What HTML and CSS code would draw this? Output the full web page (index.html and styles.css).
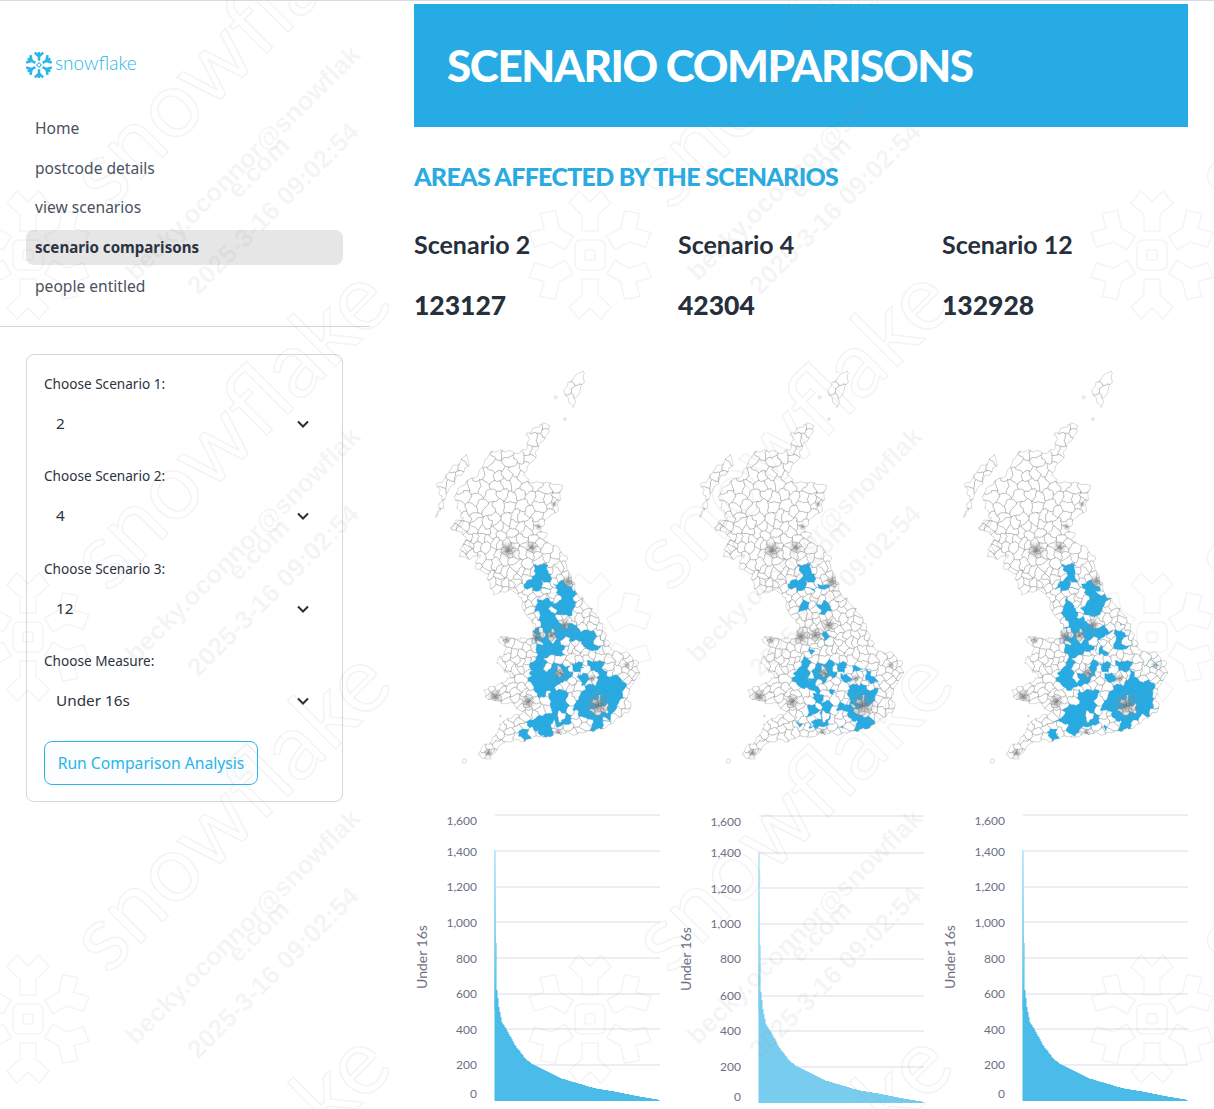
FILE: index.html
```html
<!DOCTYPE html>
<html lang="en">
<head>
    <meta charset="UTF-8">
    <meta name="viewport" content="width=device-width, initial-scale=1.0">
    <title>Scenario Comparisons</title>
    <link rel="stylesheet" href="styles.css">
</head>
<body>

<div class="page">
    <aside class="sidebar">
        <div class="logo">
            <svg class="logo-mark" viewBox="-14 -14 28 28" width="28" height="28">
                <g id="logoArm">
                    <path d="M0 -4.2V-13M-4.2 -12.4L0 -8.4L4.2 -12.4" />
                </g>
                <use href="#logoArm" transform="rotate(60)" />
                <use href="#logoArm" transform="rotate(120)" />
                <use href="#logoArm" transform="rotate(180)" />
                <use href="#logoArm" transform="rotate(240)" />
                <use href="#logoArm" transform="rotate(300)" />
                <rect class="logo-core" x="-1.7" y="-1.7" width="3.4" height="3.4" transform="rotate(45)" />
            </svg>
            <span class="logo-text">snowflake</span>
        </div>

        <nav class="nav">
            <a class="nav-item">Home</a>
            <a class="nav-item">postcode details</a>
            <a class="nav-item">view scenarios</a>
            <a class="nav-item active">scenario comparisons</a>
            <a class="nav-item">people entitled</a>
        </nav>

        <div class="divider"></div>

        <!-- Scenario picker -->
        <form class="picker">
            <div class="field">
                <label class="field-label">Choose Scenario 1:</label>
                <div class="select"><span>2</span><svg class="chevron" viewBox="0 0 12 8"><path d="M1 1.5L6 6.5L11 1.5" /></svg></div>
            </div>
            <div class="field">
                <label class="field-label">Choose Scenario 2:</label>
                <div class="select"><span>4</span><svg class="chevron" viewBox="0 0 12 8"><path d="M1 1.5L6 6.5L11 1.5" /></svg></div>
            </div>
            <div class="field">
                <label class="field-label">Choose Scenario 3:</label>
                <div class="select"><span>12</span><svg class="chevron" viewBox="0 0 12 8"><path d="M1 1.5L6 6.5L11 1.5" /></svg></div>
            </div>
            <div class="field">
                <label class="field-label">Choose Measure:</label>
                <div class="select"><span>Under 16s</span><svg class="chevron" viewBox="0 0 12 8"><path d="M1 1.5L6 6.5L11 1.5" /></svg></div>
            </div>
            <button class="run-button" type="button">Run Comparison Analysis</button>
        </form>
    </aside>

    <main class="main">
        <header class="banner">
            <h1>SCENARIO COMPARISONS</h1>
        </header>

        <h2 class="section-title">AREAS AFFECTED BY THE SCENARIOS</h2>

        <div class="columns">
            <section class="column">
                <h3>Scenario 2</h3>
                <p class="count">123127</p>
                <svg class="map" data-scenario="0" viewBox="42 0 738 1290"></svg>
                <svg class="chart" data-chart="0" viewBox="414 808 246 301"></svg>
            </section>
            <section class="column">
                <h3>Scenario 4</h3>
                <p class="count">42304</p>
                <svg class="map" data-scenario="1" viewBox="42 0 738 1290"></svg>
                <svg class="chart" data-chart="1" viewBox="414 808 246 301"></svg>
            </section>
            <section class="column">
                <h3>Scenario 12</h3>
                <p class="count">132928</p>
                <svg class="map" data-scenario="2" viewBox="42 0 738 1290"></svg>
                <svg class="chart" data-chart="2" viewBox="414 808 246 301"></svg>
            </section>
        </div>
    </main>
</div>

<!-- Faint user watermark over the whole page -->
<svg class="watermark" id="watermark" width="1214" height="1109"></svg>

<script src="map.js"></script>
</body>
</html>
```

FILE: styles.css
```css
html, body {
    margin: 0;
    padding: 0;
    height: 1109px;
    overflow: hidden;
}
body {
    font-family: 'Noto Sans', sans-serif;
    background-color: #fff;
    color: #262730;
    border-top: 1px solid #d5dae5;
    box-sizing: border-box;
    position: relative;
}
.page {
    display: flex;
}

/* Sidebar */
.sidebar {
    width: 370px;
    flex: none;
}
.logo {
    display: flex;
    align-items: center;
    margin: 50px 0 0 25px;
    height: 28px;
    gap: 2px;
}
.logo-mark path {
    fill: none;
    stroke: #29b5e8;
    stroke-width: 2.5;
}
.logo-core {
    fill: none;
    stroke: #29b5e8;
    stroke-width: 1;
}
.logo-text {
    font-family: 'Lato', sans-serif;
    font-weight: 300;
    font-size: 19px;
    color: #29b5e8;
    line-height: 24px;
    position: relative;
    top: -2px;
}
.nav {
    display: flex;
    flex-direction: column;
    gap: 4.5px;
    margin: 32px 27px 0 26px;
}
.nav-item {
    display: block;
    height: 35px;
    line-height: 35px;
    padding-left: 9px;
    border-radius: 8px;
    font-size: 15.6px;
    color: #4a5160;
}
.nav-item.active {
    background-color: #e6e6e6;
    color: #2b3340;
    font-weight: 700;
    font-size: 15.1px;
}
.divider {
    height: 1px;
    background-color: #d3d5da;
    margin-top: 22px;
}
.picker {
    display: flex;
    flex-direction: column;
    gap: 22.3px;
    margin: 27px 27px 0 26px;
    padding: 19px 17px 16px;
    border: 1px solid #d6d6d8;
    border-radius: 8px;
}
.field-label {
    display: block;
    height: 20px;
    line-height: 19px;
    margin-bottom: 10px;
    font-size: 13.6px;
    color: #2b3340;
}
.select {
    display: flex;
    align-items: center;
    justify-content: space-between;
    height: 40px;
    padding: 0 16px 0 12px;
    font-size: 15.3px;
    line-height: 38px;
    color: #2b3340;
}
.select span {
    position: relative;
    top: -1px;
}
.chevron {
    width: 12px;
    height: 8px;
}
.chevron path {
    fill: none;
    stroke: #262f3b;
    stroke-width: 2;
}
.run-button {
    align-self: flex-start;
    height: 44px;
    width: 214px;
    margin-top: -2px;
    padding: 0;
    background-color: #fbfdfe;
    border: 1px solid #29b5e8;
    border-radius: 8px;
    font-family: inherit;
    font-size: 15.7px;
    color: #29b5e8;
}

/* Main column */
.main {
    width: 774px;
    margin-left: 44px;
    padding-top: 3px;
}
.banner {
    height: 121px;
    padding: 0 0 2px 33px;
    background-color: #26abe4;
    display: flex;
    align-items: center;
}
.banner h1 {
    margin: 0;
    font-family: 'Lato', sans-serif;
    font-weight: 900;
    font-size: 44px;
    letter-spacing: -1.4px;
    color: #fff;
}
.section-title {
    margin: 32px 0 0;
    height: 34px;
    line-height: 34px;
    font-family: 'Lato', sans-serif;
    font-weight: 900;
    font-size: 25px;
    letter-spacing: -0.7px;
    color: #29abe2;
}
.columns {
    display: grid;
    grid-template-columns: repeat(3, 246px);
    gap: 18px;
    margin-top: 37px;
}
.column h3 {
    margin: 0;
    height: 30px;
    line-height: 28px;
    font-family: 'Lato', sans-serif;
    font-weight: 700;
    font-size: 25px;
    color: #262f3b;
}
.count {
    margin: 25px 0 0;
    height: 40px;
    line-height: 40px;
    font-family: 'Lato', sans-serif;
    font-weight: 900;
    font-size: 26.5px;
    color: #262f3b;
}
.map {
    display: block;
    width: 246px;
    height: 430px;
    margin-top: 25px;
    filter: blur(0.35px);
}
.map-line {
    fill: none;
    stroke: #8e8e8e;
    stroke-width: 1;
}
.map-hole {
    fill: #fff;
    stroke: #8e8e8e;
    stroke-width: 1;
}
.map-coast {
    fill: none;
    stroke: #999;
    stroke-width: 1.1;
}
.map-area {
    fill: #29abe2;
    stroke: #29abe2;
    stroke-width: 1.2;
}
.chart {
    display: block;
    width: 246px;
    height: 301px;
    margin-top: 28px;
}
.chart-grid {
    stroke: #e6e9f2;
    stroke-width: 1.4;
}
.chart-label {
    font-family: 'Lato', sans-serif;
    font-size: 12px;
    fill: #6d6f86;
    text-anchor: end;
}
.chart-title {
    font-family: 'Lato', sans-serif;
    font-size: 14px;
    fill: #6d7086;
    text-anchor: middle;
}

/* Watermark */
.watermark {
    position: absolute;
    left: 0;
    top: -1px;
    pointer-events: none;
}
.wm-word {
    font-family: 'Lato', sans-serif;
    font-weight: 400;
    font-size: 92px;
    fill: none;
    stroke: #8f8f8f;
    stroke-opacity: 0.11;
    stroke-width: 1.5;
}
.wm-text {
    font-family: 'Liberation Sans', sans-serif;
    font-weight: 700;
    font-size: 26px;
    fill: #8f8f8f;
    fill-opacity: 0.09;
}
.wm-flake {
    fill: none;
    stroke: #8f8f8f;
    stroke-opacity: 0.1;
    stroke-width: 1.6;
    stroke-linejoin: round;
}
```

FILE: map.js
```js
// Draws the three maps, the three area charts and the watermark
var SVG_NS = 'http://www.w3.org/2000/svg';

function el(parent, name, attrs, text) {
    var node = document.createElementNS(SVG_NS, name);
    for (var key in attrs) {
        node.setAttribute(key, attrs[key]);
    }
    if (text !== undefined) {
        node.textContent = text;
    }
    parent.appendChild(node);
    return node;
}

// Wiggle depends on position only, so two regions sharing an edge bend it the same way
function wiggle(p) {
    var x = p[0], y = p[1];
    return [
        x + 2.6 * Math.sin(y * 0.21 + x * 0.07) + 1.8 * Math.sin(x * 0.37 + y * 0.11) + 1.2 * Math.sin(y * 0.73 - x * 0.41),
        y + 2.6 * Math.sin(x * 0.19 - y * 0.09) + 1.8 * Math.sin(y * 0.33 + x * 0.13) + 1.2 * Math.sin(x * 0.69 + y * 0.47)
    ];
}

function bent(points) {
    var out = [];
    points.forEach(function(a, i) {
        var b = points[(i + 1) % points.length];
        var steps = Math.max(1, Math.round(Math.hypot(b[0] - a[0], b[1] - a[1]) / 5));
        for (var s = 0; s < steps; s++) {
            out.push(wiggle([a[0] + (b[0] - a[0]) * s / steps, a[1] + (b[1] - a[1]) * s / steps]));
        }
    });
    return out;
}

function toPath(points) {
    return 'M' + points.map(function(p) {
        return p[0].toFixed(1) + ' ' + p[1].toFixed(1);
    }).join('L') + 'Z';
}

// Seeded so the picture is the same every run
var seed = 41;
function rand() {
    seed = (seed * 16807) % 2147483647;
    return seed / 2147483647;
}

var mainland = [[400,240],[418,222],[448,224],[442,258],[412,288],[404,322],[372,368],[386,396],[440,398],[488,406],[478,450],[470,482],[436,512],[420,532],[440,552],[432,572],[468,590],[500,622],[498,650],[520,698],[530,735],[570,770],[596,805],[610,840],[628,882],[640,905],[680,908],[712,938],[716,972],[695,1010],[680,1042],[696,1078],[660,1098],[622,1130],[570,1145],[520,1152],[470,1150],[440,1162],[400,1158],[372,1172],[335,1172],[300,1182],[270,1228],[232,1218],[240,1202],[285,1160],[300,1122],[340,1100],[372,1090],[340,1062],[295,1056],[256,1040],[254,1020],[300,1004],[335,985],[310,960],[290,932],[322,900],[292,868],[312,858],[345,868],[395,862],[405,820],[368,780],[366,742],[338,722],[280,732],[266,690],[262,670],[225,655],[240,612],[205,625],[180,620],[180,598],[200,575],[188,550],[150,532],[190,505],[172,470],[165,430],[200,395],[230,378],[252,340],[270,308],[310,300],[350,310],[385,290],[382,250]];
var skye = [[108,498],[125,440],[112,408],[158,352],[200,314],[208,342],[176,380],[140,430],[130,472]];
var shetland = [[490,116],[515,90],[540,65],[555,70],[546,108],[532,140],[520,172],[506,150]];
var mull = [[152,532],[172,510],[188,512],[180,535],[160,540]];
var jura = [[192,572],[210,570],[214,600],[198,612]];
var land = [mainland, skye, shetland, mull, jura];

var cities = [[325,600,36],[395,592,26],[505,695,28],[410,860,34],[455,855,30],[495,825,28],[480,970,30],[595,1065,54],[475,1148,20],[385,1055,30],[285,1040,30],[265,1208,20],[680,945,16],[462,462,14],[415,530,16],[320,870,18],[575,985,18]];

function inPolygon(x, y, poly) {
    var inside = false;
    for (var i = 0, j = poly.length - 1; i < poly.length; j = i++) {
        var a = poly[i], b = poly[j];
        if ((a[1] > y) !== (b[1] > y) && x < (b[0] - a[0]) * (y - a[1]) / (b[1] - a[1]) + a[0]) {
            inside = !inside;
        }
    }
    return inside;
}

function cellSize(x, y) {
    var size = y < 500 ? 30 : (y < 650 ? 25 : 21);
    cities.forEach(function(c) {
        var d = Math.hypot(x - c[0], y - c[1]);
        if (d < c[2]) {
            size = Math.min(size, 2.6 + (d / c[2]) * (size - 2.6));
        }
    });
    return size;
}

// Scatter region centres: the cities first, closely packed, then the rest
var centres = [];
function scatter(px, py) {
    var onLand = land.some(function(poly) { return inPolygon(px, py, poly); });
    if (!onLand) return;
    var size = cellSize(px, py) * (0.7 + rand() * 0.7);
    var clash = centres.some(function(c) {
        return Math.hypot(c[0] - px, c[1] - py) < size;
    });
    if (!clash) centres.push([px, py, size]);
}
cities.forEach(function(c) {
    for (var n = 0; n < c[2] * 14; n++) {
        var angle = rand() * Math.PI * 2;
        var reach = rand() * c[2];
        scatter(c[0] + Math.cos(angle) * reach, c[1] + Math.sin(angle) * reach);
    }
});
for (var t = 0; t < 26000; t++) {
    scatter(90 + rand() * 640, 50 + rand() * 1190);
}

// Region edges: each centre keeps the part of the plane closest to it
function clipHalf(poly, mx, my, nx, ny) {
    var out = [];
    for (var i = 0; i < poly.length; i++) {
        var a = poly[i], b = poly[(i + 1) % poly.length];
        var da = (a[0] - mx) * nx + (a[1] - my) * ny;
        var db = (b[0] - mx) * nx + (b[1] - my) * ny;
        if (da <= 0) out.push(a);
        if ((da < 0 && db > 0) || (da > 0 && db < 0)) {
            var k = da / (da - db);
            out.push([a[0] + (b[0] - a[0]) * k, a[1] + (b[1] - a[1]) * k]);
        }
    }
    return out;
}

var cells = centres.map(function(c) {
    var poly = [[c[0] - 90, c[1] - 90], [c[0] + 90, c[1] - 90], [c[0] + 90, c[1] + 90], [c[0] - 90, c[1] + 90]];
    centres.forEach(function(o) {
        if (o === c) return;
        var dx = o[0] - c[0], dy = o[1] - c[1];
        if (Math.abs(dx) > 180 || Math.abs(dy) > 180) return;
        poly = clipHalf(poly, (o[0] + c[0]) / 2, (o[1] + c[1]) / 2, dx, dy);
    });
    return { poly: bent(poly), x: c[0], y: c[1], size: c[2], skip: rand() };
});

// Shaded areas of each scenario, traced from the top of England downwards
var scenario2 = [
    [[400,650],[440,640],[445,675],[450,715],[420,720],[385,725],[375,705],[410,680]],
    [[465,705],[515,695],[525,760],[510,800],[475,790],[450,765],[485,750],[490,725]],
    [[415,750],[445,745],[450,790],[480,820],[550,840],[550,860],[500,880],[480,920],[465,905],[445,930],[430,960],[470,945],[510,950],[500,980],[470,1010],[430,1030],[400,1020],[390,970],[415,920],[405,870],[420,800]],
    [[555,860],[580,850],[605,880],[590,905],[555,895]],
    [[565,935],[595,935],[597,965],[570,965]],
    [[515,940],[545,935],[550,955],[520,960]],
    [[530,970],[570,985],[550,1005]],
    [[610,960],[630,985],[680,995],[660,1050],[640,1090],[600,1110],[630,1115],[555,1105],[520,1075],[540,1040],[580,1000]],
    [[450,1020],[500,1030],[500,1120],[470,1130],[450,1060]],
    [[380,1115],[430,1090],[460,1110],[450,1160],[415,1150],[420,1130],[385,1130]],
    [[355,1140],[385,1140],[380,1160],[355,1155]],
    [[585,1125],[610,1125],[605,1140],[590,1140]]
];
var scenario4 = [
    [[405,100],[435,100],[445,140],[450,180],[425,170],[400,185],[380,180],[385,160],[415,145]],
    [[465,165],[495,165],[490,175],[465,175]],
    [[420,208],[435,215],[430,235],[418,230]],
    [[455,222],[480,225],[505,238],[470,240]],
    [[480,318],[495,320],[497,338],[485,335]],
    [[435,352],[450,365],[440,372]],
    [[420,380],[445,395],[435,430],[430,465],[400,470],[390,430],[410,415]],
    [[452,405],[480,410],[495,395],[510,420],[490,445],[465,450],[450,430]],
    [[435,445],[455,445],[450,475],[438,470]],
    [[515,400],[540,395],[548,415],[525,420]],
    [[565,410],[600,415],[575,430],[565,425]],
    [[527,430],[550,435],[565,455],[540,458]],
    [[610,420],[625,440],[640,450],[620,460],[605,440]],
    [[585,460],[610,470],[600,500],[635,480],[625,510],[600,540],[580,540],[560,520],[550,480]],
    [[525,520],[560,525],[575,550],[620,570],[630,580],[600,575],[560,570],[550,545],[520,540]],
    [[450,490],[480,495],[465,510],[455,510]],
    [[495,480],[515,480],[505,495]],
    [[460,515],[500,515],[495,585],[460,590],[440,575],[470,570],[475,530]],
    [[440,535],[455,540],[445,560],[425,560]],
    [[398,575],[415,580],[405,592]],
    [[435,580],[448,590],[440,597]],
    [[585,585],[610,590],[605,605],[590,603]],
    [[535,585],[540,595],[530,595]]
];
var scenario12 = [
    [[400,100],[438,98],[440,130],[450,175],[420,170],[400,185],[378,175],[410,150],[420,130]],
    [[465,160],[510,150],[520,180],[490,180],[465,175]],
    [[485,190],[530,195],[525,240],[500,260],[470,250],[455,235],[490,225]],
    [[418,205],[445,235],[450,270],[490,290],[550,305],[530,320],[505,330],[490,370],[470,360],[445,375],[430,380],[405,340],[420,300],[405,290]],
    [[565,310],[590,310],[605,345],[585,360],[555,355]],
    [[520,345],[535,360],[510,375]],
    [[425,380],[450,385],[445,410],[430,430],[445,460],[490,400],[510,420],[480,450],[450,465],[430,480],[400,470],[390,430],[408,415]],
    [[515,400],[540,395],[548,415],[525,420]],
    [[565,395],[595,398],[595,425],[570,425]],
    [[527,430],[555,430],[565,455],[540,458]],
    [[610,420],[630,455],[680,455],[680,480],[665,520],[640,560],[610,575],[560,570],[550,545],[520,540],[530,515],[560,480],[600,465]],
    [[660,540],[690,537],[680,560],[665,565]],
    [[450,480],[480,495],[500,480],[515,480],[500,510],[500,585],[460,590],[440,620],[415,600],[425,575],[380,575],[420,545],[455,530],[475,515],[455,505]],
    [[355,605],[380,595],[390,610],[380,625]],
    [[530,585],[540,590],[530,605]],
    [[585,585],[610,590],[605,605],[590,603]],
    [[670,395],[690,405],[665,410]],
    [[470,605],[485,605],[475,612]],
    [[575,275],[585,280],[578,290]]
];

function shift(areas) {
    return areas.map(function(area) {
        return area.map(function(p) { return [p[0], p[1] + 540]; });
    });
}
var scenarios = [scenario2, shift(scenario4), shift(scenario12)];

var landPath = land.map(function(poly) { return toPath(bent(poly)); }).join('');
var linesPath = cells.map(function(c) { return toPath(c.poly); }).join('');
// City regions and a few others stay unshaded inside a shaded area
var holes = cells.filter(function(c) {
    return c.size < 9 ? c.skip < 0.6 : c.skip < 0.1;
}).map(function(c) { return toPath(c.poly); }).join('');

document.querySelectorAll('.map').forEach(function(svg) {
    var index = Number(svg.getAttribute('data-scenario'));
    var defs = el(svg, 'defs', {});
    el(defs, 'clipPath', { id: 'land' + index }).innerHTML = '<path d="' + landPath + '"/>';
    var haze = el(defs, 'radialGradient', { id: 'haze' + index });
    el(haze, 'stop', { offset: 0, 'stop-color': '#6f6f6f', 'stop-opacity': 0.8 });
    el(haze, 'stop', { offset: 0.45, 'stop-color': '#8a8a8a', 'stop-opacity': 0.35 });
    el(haze, 'stop', { offset: 1, 'stop-color': '#8a8a8a', 'stop-opacity': 0 });

    var body = el(svg, 'g', { 'clip-path': 'url(#land' + index + ')' });
    el(body, 'path', { 'class': 'map-line', d: linesPath });

    // The traced shape first, then whole regions so the edges follow the boundaries
    var shaded = cells.filter(function(c) {
        return scenarios[index].some(function(area) { return inPolygon(c.x, c.y, area); });
    });
    var fill = scenarios[index].map(function(area) { return toPath(bent(area)); }).join('');
    fill += shaded.map(function(c) { return toPath(c.poly); }).join('');
    el(body, 'path', { 'class': 'map-area', d: fill });
    el(body, 'path', { 'class': 'map-hole', d: holes });

    // City boundaries are too fine to tell apart at this size and read as a grey smudge
    cities.forEach(function(c) {
        el(body, 'circle', { cx: c[0], cy: c[1], r: c[2] * 0.8, fill: 'url(#haze' + index + ')' });
    });

    el(svg, 'path', { 'class': 'map-coast', d: landPath });
    [[467,142,4], [495,207,4], [301,1098,3], [193,1233,6]].forEach(function(dot) {
        el(svg, 'circle', { 'class': 'map-coast', cx: dot[0], cy: dot[1], r: dot[2] });
    });
});

// Area charts, one row of numbers per chart
var charts = [
    { color: '#4bbbe9', lines: [815,851,887,922,958,994,1029,1065], labels: [821,852,887,923,959,994,1030,1065,1094], base: 1100, title: 957 },
    { color: '#78cdef', lines: [816,853,888,924,959,996,1031,1067], labels: [822,853,889,924,959,996,1031,1067,1097], base: 1102, title: 959 },
    { color: '#4bbbe9', lines: [815,851,887,922,958,994,1029,1065], labels: [821,852,887,923,959,994,1030,1065,1094], base: 1100, title: 957 }
];
var ticks = ['1,600', '1,400', '1,200', '1,000', '800', '600', '400', '200', '0'];
// x in pixels from the axis, height in pixels above the base
var curve = [[0,250],[1,157],[2,110],[4,93],[7,78],[12,70],[20,55],[30,42],[37,36],[49,30],[65,22],[82,17],[99,12],[122,8],[142,4],[165,0]];

function curveAt(x) {
    for (var i = 1; i < curve.length; i++) {
        if (x <= curve[i][0]) {
            var a = curve[i - 1], b = curve[i];
            return a[1] + (b[1] - a[1]) * (x - a[0]) / (b[0] - a[0]);
        }
    }
    return 0;
}

document.querySelectorAll('.chart').forEach(function(svg) {
    var chart = charts[Number(svg.getAttribute('data-chart'))];
    var grad = el(el(svg, 'defs', {}), 'linearGradient', { id: 'spike' + svg.getAttribute('data-chart'), x1: 0, y1: 0, x2: 0, y2: 1 });
    el(grad, 'stop', { offset: 0, 'stop-color': '#c4eefb' });
    el(grad, 'stop', { offset: 1, 'stop-color': chart.color });

    chart.lines.forEach(function(y) {
        el(svg, 'line', { 'class': 'chart-grid', x1: 495, x2: 660, y1: y, y2: y });
    });
    chart.labels.forEach(function(y, i) {
        el(svg, 'text', { 'class': 'chart-label', x: 477, y: y + 3.5 }, ticks[i]);
    });
    el(svg, 'text', { 'class': 'chart-title', transform: 'translate(427 ' + chart.title + ') rotate(-90)' }, 'Under 16s');

    // One step per pixel, the bars of the source chart are that thin
    var points = [[494.5, chart.base + 1]];
    for (var x = 0; x < 165; x++) {
        var h = Math.round(curveAt(x));
        points.push([494.5 + x, chart.base - h], [495.5 + x, chart.base - h]);
    }
    points.push([659.5, chart.base + 1]);
    el(svg, 'path', { d: toPath(points), fill: chart.color });
    el(svg, 'rect', { x: 494.5, y: chart.base - 250, width: 1.5, height: 160, fill: 'url(#spike' + svg.getAttribute('data-chart') + ')' });
});

// Watermark tile repeats every 562 by 382 pixels
var mark = document.getElementById('watermark');
var armPoints = '-8,-24 8,-24 8,-40 21,-52 11,-64 0,-53 -11,-64 -21,-52 -8,-40';

for (var row = 0; row < 4; row++) {
    for (var col = 0; col < 3; col++) {
        var g = el(mark, 'g', { transform: 'translate(' + (col * 562) + ' ' + (row * 382) + ')' });
        el(g, 'text', { 'class': 'wm-word', transform: 'translate(108 212) rotate(-45)' }, 'snowflake');
        if (row === 3) continue;

        var flake = el(g, 'g', { 'class': 'wm-flake', transform: 'translate(28 255)' });
        for (var a = 0; a < 6; a++) {
            el(flake, 'polygon', { points: armPoints, transform: 'rotate(' + (a * 60) + ')' });
        }
        el(flake, 'rect', { x: -15, y: -15, width: 30, height: 30, rx: 6 });
        el(flake, 'rect', { x: -5, y: -5, width: 10, height: 10, rx: 2 });

        el(g, 'text', { 'class': 'wm-text', transform: 'translate(136 282) rotate(-45)' }, 'becky.oconnor@snowflak');
        el(g, 'text', { 'class': 'wm-text', transform: 'translate(238 200) rotate(-45)' }, 'e.com');
        el(g, 'text', { 'class': 'wm-text', transform: 'translate(198 296) rotate(-45)' }, '2025-3-16 09:02:54');
    }
}
```
